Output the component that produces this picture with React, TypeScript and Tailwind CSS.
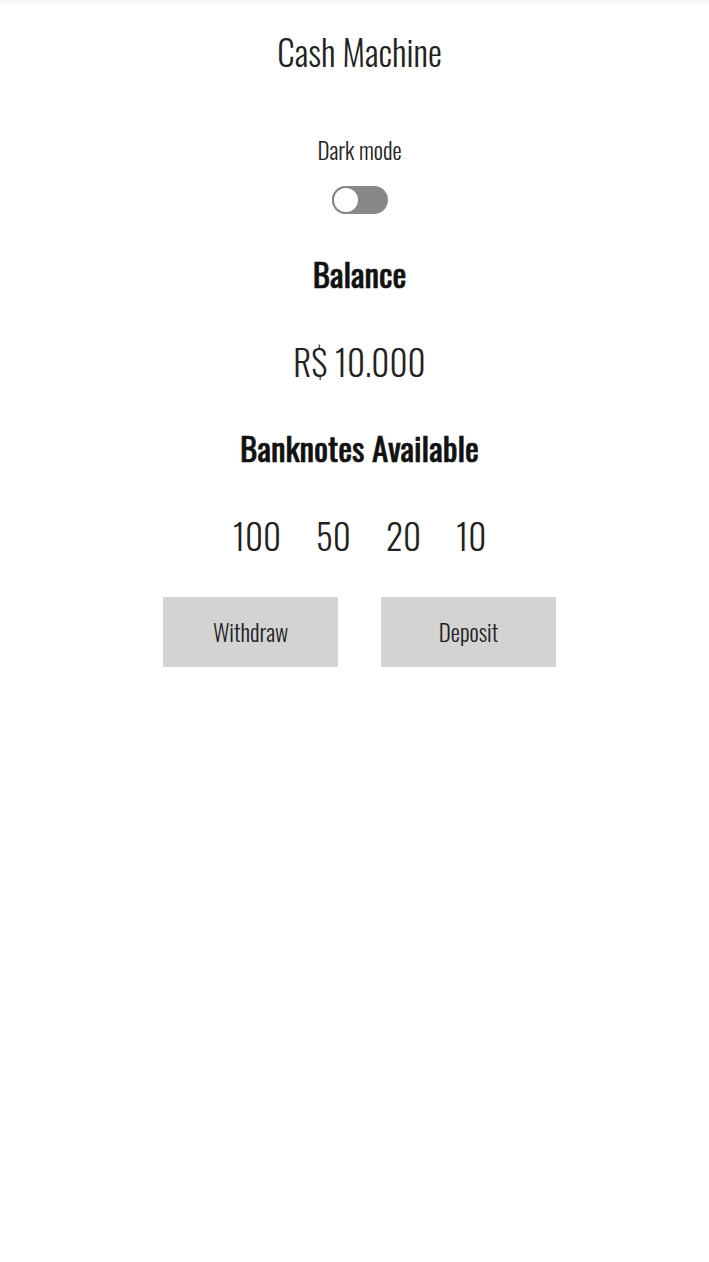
import { useState } from "react";

const font = { fontFamily: 'Oswald, "Open Sans", sans-serif' };

const App = () => {
  const [dark, setDark] = useState(false);
  const notes = [100, 50, 20, 10];

  return (
    <div className="min-h-[1262px] bg-white text-[#111]" style={font}>
      <div className="h-[5px] bg-gradient-to-b from-[#f5f5f5] to-white" />
      <div className="flex flex-col items-center pl-[10px]">
        <h1 className="mt-[24px] text-[35px] font-light leading-[44px] text-[#222]">Cash Machine</h1>

        <div className="mt-[63px] text-[23px] font-light leading-[28px] text-[#222]">Dark mode</div>
        <button
          onClick={() => setDark(!dark)}
          className="mt-[22px] flex h-[28px] w-[56px] items-center rounded-full bg-[#888]"
        >
          <span className="h-[28px] w-[28px] rounded-full border-2 border-[#888] bg-white" />
        </button>

        <h2 className="mt-[36px] text-[33px] font-normal leading-[48px] [-webkit-text-stroke:0.7px_#111]">Balance</h2>
        <div className="mt-[39px] text-[35px] font-light leading-[48px] text-[#222]">R$ 10.000</div>

        <h2 className="mt-[39px] text-[33px] font-normal leading-[48px] [-webkit-text-stroke:0.7px_#111]">
          Banknotes Available
        </h2>
        <div className="mt-[39px] flex gap-[35px] text-[35px] font-light leading-[48px] text-[#222]">
          {notes.map((n) => (
            <span key={n}>{n}</span>
          ))}
        </div>

        <div className="mt-[38px] flex gap-[43px]">
          <button className="h-[70px] w-[175px] bg-[#d3d3d3] text-[23px] font-light text-[#222]">Withdraw</button>
          <button className="h-[70px] w-[175px] bg-[#d3d3d3] text-[23px] font-light text-[#222]">Deposit</button>
        </div>
      </div>
    </div>
  );
};

export default App;
